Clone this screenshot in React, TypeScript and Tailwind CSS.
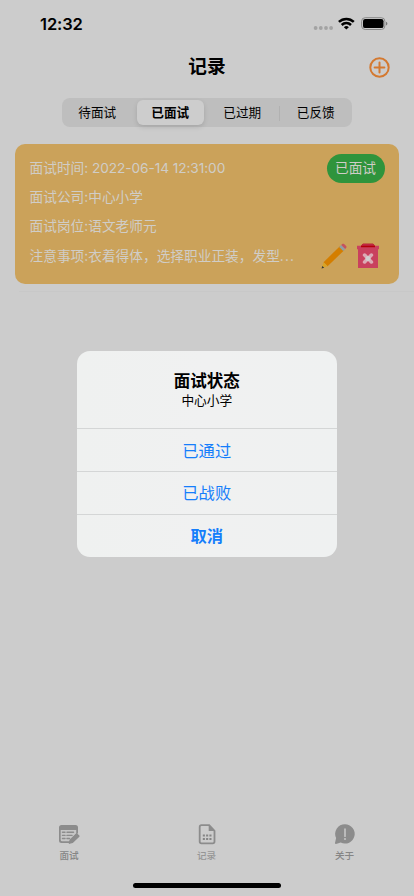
import clsx from "clsx";

const tabs = ["待面试", "已面试", "已过期", "已反馈"];

const record = {
  time: " 2022-06-14 12:31:00",
  company: "中心小学",
  job: "语文老师元",
  note: "衣着得体，选择职业正装，发型",
};

function StatusBar() {
  return (
    <div className="flex h-[44px] items-start justify-between pl-[40px] pr-[26px]">
      <span className="mt-[12px] text-[16.5px] leading-6 font-semibold tracking-[-0.1px]">
        12:32
      </span>
      <div className="mt-[17px] flex h-[14px] items-start">
        <svg width="20" height="14" viewBox="0 0 20 14" fill="#a3a3a3">
          <circle cx="2.6" cy="11" r="1.9" />
          <circle cx="7.8" cy="11" r="1.9" />
          <circle cx="13" cy="11" r="1.9" />
          <circle cx="18.1" cy="11" r="1.9" />
        </svg>
        <svg className="ml-[5px]" width="18" height="14" viewBox="0 0 18 14" fill="none" stroke="#000" strokeWidth="2.5">
          <path d="M.9 4.900a10.700 10.700 0 0 1 14.900 0" />
          <path d="M3.700 8a6.700 6.700 0 0 1 9.300 0" />
          <path d="M8.350 12.600l-2.500-2.400a3.600 3.600 0 0 1 5 0z" fill="#000" stroke="none" />
        </svg>
        <svg className="ml-[5px]" width="27" height="14" viewBox="0 0 27 14">
          <rect x="0.6" y="0.7" width="23.3" height="11.8" rx="3.6" fill="none" stroke="#888" strokeWidth="1" />
          <rect x="2" y="2.1" width="20.5" height="9" rx="2.2" fill="#000" />
          <path d="M25 4.7c1.9.6 1.9 3.3 0 3.9z" fill="#777" />
        </svg>
      </div>
    </div>
  );
}

function NavBar() {
  return (
    <div className="grid h-[44px] grid-cols-[1fr_auto_1fr] items-center pr-[24px]">
      <span />
      <h1 className="pt-[2px] pl-[24px] text-[18.7px] font-bold">记录</h1>
      <svg className="mt-[2px] justify-self-end" width="21" height="21" viewBox="0 0 21 21" fill="none" stroke="#d47930" strokeWidth="2">
        <circle cx="10.5" cy="10.5" r="9.2" />
        <path d="M10.5 5.6v9.8M5.6 10.5h9.8" strokeLinecap="round" />
      </svg>
    </div>
  );
}

function Segments() {
  return (
    <div className="mx-auto mt-[10px] grid h-[29px] w-[290px] grid-cols-4 rounded-[8px] bg-[#bebebe] py-[2px]">
      {tabs.map((t, i) => (
        <div
          key={t}
          className={clsx(
            "flex items-center justify-center pt-px text-[12.6px] whitespace-nowrap",
            i === 0 && "pr-[2px]",
            i === 1 && "mr-[3px] ml-[2px] rounded-[6px] bg-[#cdcdcd] font-bold shadow-[0_2px_5px_rgba(0,0,0,0.13)]",
            i === 2 && "pr-[2px]"
          )}
        >
          {i === 3 && <span className="-ml-px h-[15px] w-px bg-[#b1b1b1]" />}
          <span className={clsx(i === 3 && "flex-1 text-center")}>{t}</span>
        </div>
      ))}
    </div>
  );
}

function PencilIcon() {
  return (
    <svg width="26" height="26" viewBox="0 0 26 26">
      <path d="M19.1 3.1l4.1 4.1L6.6 23.3l-4.1-4.1z" fill="#d47e00" />
      <path d="M2.5 19.2l4.1 4.1L.6 25.3z" fill="#d9a426" />
      <path d="M1.3 23l1.9 1.7L.5 25.4z" fill="#303639" />
      <path d="M18.2 4l2-2 4.1 4.1-2 2z" fill="#8d9fa7" />
      <path d="M20.2 2l1-.9c.6-.6 1.3-.6 1.9 0l2 2c.6.6.6 1.3 0 1.9l-.9.9z" fill="#c5535e" />
    </svg>
  );
}

function TrashIcon() {
  return (
    <svg width="22" height="26" viewBox="0 0 22 26">
      <path d="M0 2.7h22v3.6h-1V25H1V6.3H0z" fill="#c9415e" />
      <path d="M6 .7h10l2 2v1.6H4V2.7z" fill="#b30009" />
      <path d="M6 .7h10l2 2H4z" fill="#c02743" />
      <path d="M7.6 12.1l6.8 6.8M14.4 12.1l-6.8 6.8" stroke="#dca9b4" strokeWidth="3.6" strokeLinecap="round" />
      <circle cx="11" cy="15.5" r="2.5" fill="#cfcfcf" />
    </svg>
  );
}

function RecordCard() {
  return (
    <div className="mx-[15px] mt-[17px] flex h-[140px] flex-col rounded-[10px] bg-[#cba25a] px-[14.5px] pt-[10px] text-[13.7px] leading-[29px] text-[#d0cdc7]">
      <div className="flex h-[29px] justify-between">
        <span className="whitespace-pre">
          面试时间:<span className="tracking-[-0.08px]">{record.time}</span>
        </span>
        <span className="h-[29px] w-[58px] rounded-full bg-[#2f943c] text-center">已面试</span>
      </div>
      <div>面试公司:{record.company}</div>
      <div>面试岗位:{record.job}</div>
      <div className="flex h-[29px] justify-between">
        <span className="pt-px whitespace-nowrap">
          注意事项:{record.note}
          <span className="tracking-[1.1px]">...</span>
        </span>
        <div className="mr-[6px] flex items-center gap-[10px]">
          <PencilIcon />
          <TrashIcon />
        </div>
      </div>
    </div>
  );
}

function TabBar() {
  return (
    <div className="grid h-[64px] grid-cols-3 text-[9.6px] leading-[14px] font-medium text-[#858585]">
      <div className="flex flex-col items-center pt-[4px]">
        <svg width="22" height="22" viewBox="0 0 22 22">
          <path d="M3.5 2h14q2.5 0 2.5 2.5V10l-7.5 8.5v1.5h-9Q1 20 1 17.5v-13Q1 2 3.5 2z" fill="#8c8c8c" />
          <path d="M2.7 7h15.5v3.5l-6.5 7.7H4.2q-1.5 0-1.5-1.5z" fill="#c6c6c6" />
          <path d="M4.5 9.3h2.5M9 9.3h6.5M4.5 12.4h2.5M9 12.4h5M4.5 15.5h2.5M9 15.5h2.5" stroke="#8c8c8c" strokeWidth="1.4" strokeLinecap="round" />
          <path d="M18.6 11l2.2 2.1-6.3 6.2-3 .8.8-3z" fill="#8c8c8c" stroke="#8c8c8c" strokeWidth="1.6" strokeLinejoin="round" />
        </svg>
        <span className="mt-[4px]">面试</span>
      </div>
      <div className="flex flex-col items-center pt-[4px] pr-px text-[#969696]">
        <svg width="22" height="22" viewBox="0 0 22 22">
          <path d="M5.5 2.2h7.7l5.3 5.6v10.7q0 1.8-1.8 1.8H5.5q-1.8 0-1.8-1.8V4q0-1.8 1.8-1.8z" fill="none" stroke="#8c8c8c" strokeWidth="1.8" />
          <path d="M12.7 2l6 6h-6z" fill="#8c8c8c" />
          <path d="M6.8 12.4h2.1m1.2 0h2.1m1.2 0h2.1M6.8 16.1h2.1m1.2 0h2.1m1.2 0h2.1" stroke="#858585" strokeWidth="2" />
        </svg>
        <span className="mt-[4px]">记录</span>
      </div>
      <div className="flex flex-col items-center pt-[4px] pr-px">
        <svg width="22" height="22" viewBox="0 0 22 22">
          <path d="M11 1.2a9.7 9.7 0 1 1-4.3 18.4L2 21q-1.3 0-.9-1.4l1-4.5A9.7 9.7 0 0 1 11 1.2z" fill="#8c8c8c" />
          <path d="M11 6v7.2" stroke="#c4c4c4" strokeWidth="1.7" strokeLinecap="round" />
          <circle cx="11" cy="16" r="1.1" fill="#c4c4c4" />
        </svg>
        <span className="mt-[4px]">关于</span>
      </div>
    </div>
  );
}

function StateAlert() {
  return (
    <div className="absolute top-[351px] left-[76.5px] w-[260.5px] overflow-hidden rounded-[13px] bg-linear-to-r from-[#eff1f0] via-[#f0f1f1] to-[#eff1f1] text-center">
      <div className="h-[78px] border-b border-[#d4d6d6] pt-[20px]">
        <div className="text-[16.5px] leading-[20px] font-bold">面试状态</div>
        <div className="text-[12.7px] leading-[20px]">中心小学</div>
      </div>
      <div className="h-[43px] border-b border-[#d4d6d6] pt-px text-[16.3px] leading-[43px] text-[#157efb]">已通过</div>
      <div className="h-[43px] border-b border-[#d4d6d6] text-[16.3px] leading-[43px] text-[#157efb]">已战败</div>
      <div className="h-[42px] text-[16.3px] leading-[43px] font-bold text-[#157efb]">取消</div>
    </div>
  );
}

export default function App() {
  return (
    <div className="relative flex h-[896px] w-[414px] flex-col overflow-hidden bg-[#ccc] font-['Inter','Noto_Sans_CJK_SC',sans-serif] text-black">
      <StatusBar />
      <NavBar />
      <Segments />
      <RecordCard />
      <div className="mt-[7px] ml-[19px] h-px bg-[#c8c8c8]" />
      <div className="flex-1" />
      <TabBar />
      <div className="mx-auto mb-[8px] h-[5px] w-[148px] shrink-0 rounded-full bg-black" />
      <StateAlert />
    </div>
  );
}
